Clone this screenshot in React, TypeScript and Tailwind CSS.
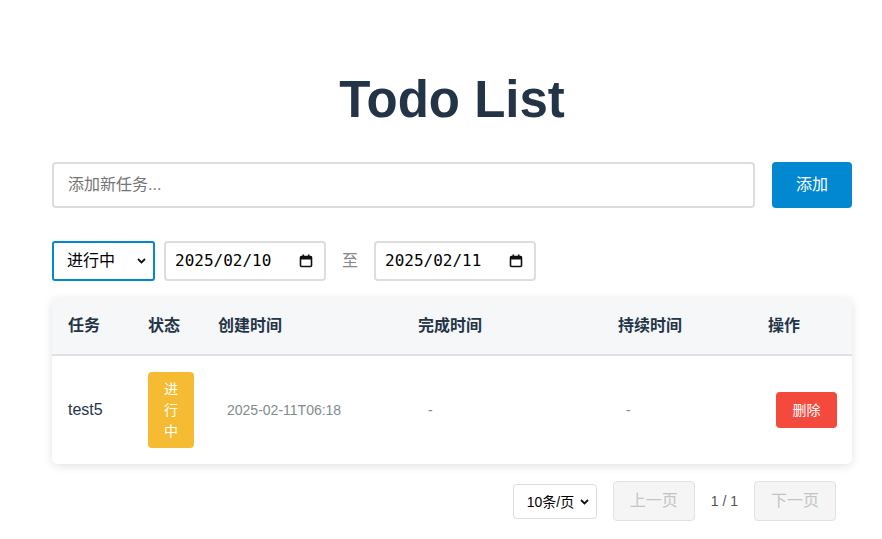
import React from "react";

export default function App() {
  const sans = { fontFamily: '"Liberation Sans", "Noto Sans CJK SC", sans-serif' };
  return (
    <div className="min-h-screen w-full bg-white" style={sans}>
      <div className="ml-[52px] w-[800px] pt-[68px]">
        <h1 className="text-center text-[51px] font-bold leading-[64px] text-[#243447]">Todo List</h1>

        <div className="mt-[30px] flex items-center gap-[17px]">
          <input
            className="h-[46px] flex-1 rounded-[4px] border-2 border-[#dddddd] px-[14px] text-[16px] text-[#333] outline-none placeholder:text-[#757575]"
            placeholder="添加新任务..."
          />
          <button className="h-[46px] w-[80px] rounded-[4px] bg-[#0288d1] text-[16px] text-white">添加</button>
        </div>

        <div className="mt-[33px] flex items-center">
          <div className="relative h-[40px] w-[103px] rounded-[3px] border-2 border-[#0288d1] bg-white">
            <span className="absolute left-[13px] top-[7px] text-[16px] leading-[22px] text-black">进行中</span>
            <svg className="absolute right-[7px] top-[15px]" width="9" height="6" viewBox="0 0 9 6">
              <path d="M1 1 L4.5 4.5 L8 1" stroke="#111" strokeWidth="1.8" fill="none" />
            </svg>
          </div>
          <DateBox value="2025/02/10" className="ml-[9px]" />
          <span className="mx-[16px] text-[16px] text-[#888]">至</span>
          <DateBox value="2025/02/11" />
        </div>

        <div className="mt-[17px] overflow-hidden rounded-[6px] bg-white shadow-[0_2px_10px_rgba(0,0,0,0.12)]">
          <table className="w-full table-fixed border-collapse">
            <colgroup>
              <col className="w-[80px]" />
              <col className="w-[70px]" />
              <col className="w-[200px]" />
              <col className="w-[200px]" />
              <col className="w-[150px]" />
              <col className="w-[100px]" />
            </colgroup>
            <thead>
              <tr className="border-b-2 border-[#dde1e6] bg-[#f5f7f9] text-left text-[16px] font-semibold text-[#243447]">
                {["任务", "状态", "创建时间", "完成时间", "持续时间", "操作"].map((h) => (
                  <th key={h} className="px-[16px] py-[16px] font-semibold leading-[24px]">
                    {h}
                  </th>
                ))}
              </tr>
            </thead>
            <tbody>
              <tr>
                <td className="px-[16px] py-[16px] text-[16px] text-[#243447]">test5</td>
                <td className="overflow-visible px-[16px] py-[16px]">
                  <span className="block w-[46px] rounded-[4px] bg-[#f5bb33] px-[16px] py-[6.5px] text-center text-[14px] leading-[21px] text-white">
                    进行中
                  </span>
                </td>
                <td className="py-[16px] pl-[25px] text-[14px] text-[#7f8c8d]">2025-02-11T06:18</td>
                <td className="py-[16px] pl-[26px] text-[14px] text-[#7f8c8d]">-</td>
                <td className="py-[16px] pl-[24px] text-[14px] text-[#7f8c8d]">-</td>
                <td className="py-[16px] pl-[24px]">
                  <button className="h-[36px] w-[61px] rounded-[4px] bg-[#f44a3e] text-[14px] text-white">删除</button>
                </td>
              </tr>
            </tbody>
          </table>
        </div>

        <div className="mt-[17px] flex items-center justify-end pr-[16px]">
          <div className="relative h-[35px] w-[84px] rounded-[4px] border border-[#dddddd] bg-white">
            <span className="absolute left-[13px] top-[7px] text-[14px] leading-[20px] text-black">10条/页</span>
            <svg className="absolute right-[7px] top-[14px]" width="9" height="6" viewBox="0 0 9 6">
              <path d="M1 1 L4.5 4.5 L8 1" stroke="#111" strokeWidth="1.8" fill="none" />
            </svg>
          </div>
          <button className="ml-[16px] h-[40px] w-[82px] rounded-[4px] border border-[#e2e2e2] bg-[#f5f5f5] text-[16px] text-[#c4c4c4]">
            上一页
          </button>
          <span className="mx-[16px] text-[14px] text-[#555]">1 / 1</span>
          <button className="h-[40px] w-[82px] rounded-[4px] border border-[#e2e2e2] bg-[#f5f5f5] text-[16px] text-[#c4c4c4]">
            下一页
          </button>
        </div>
      </div>
    </div>
  );
}

function DateBox({ value, className = "" }: { value: string; className?: string }) {
  return (
    <div
      className={`flex h-[40px] w-[162px] items-center justify-between rounded-[4px] border-2 border-[#dddddd] bg-white pl-[9px] pr-[11px] ${className}`}
    >
      <span className="text-[16px] text-black" style={{ fontFamily: '"DejaVu Sans Mono", monospace' }}>
        {value}
      </span>
      <svg width="14" height="14" viewBox="0 0 14 14">
        <rect x="1.5" y="2.5" width="11" height="10" rx="1" fill="none" stroke="#111" strokeWidth="1.6" />
        <rect x="1.5" y="2.5" width="11" height="3" fill="#111" />
        <rect x="3.5" y="0.5" width="1.6" height="3" fill="#111" />
        <rect x="8.9" y="0.5" width="1.6" height="3" fill="#111" />
      </svg>
    </div>
  );
}
